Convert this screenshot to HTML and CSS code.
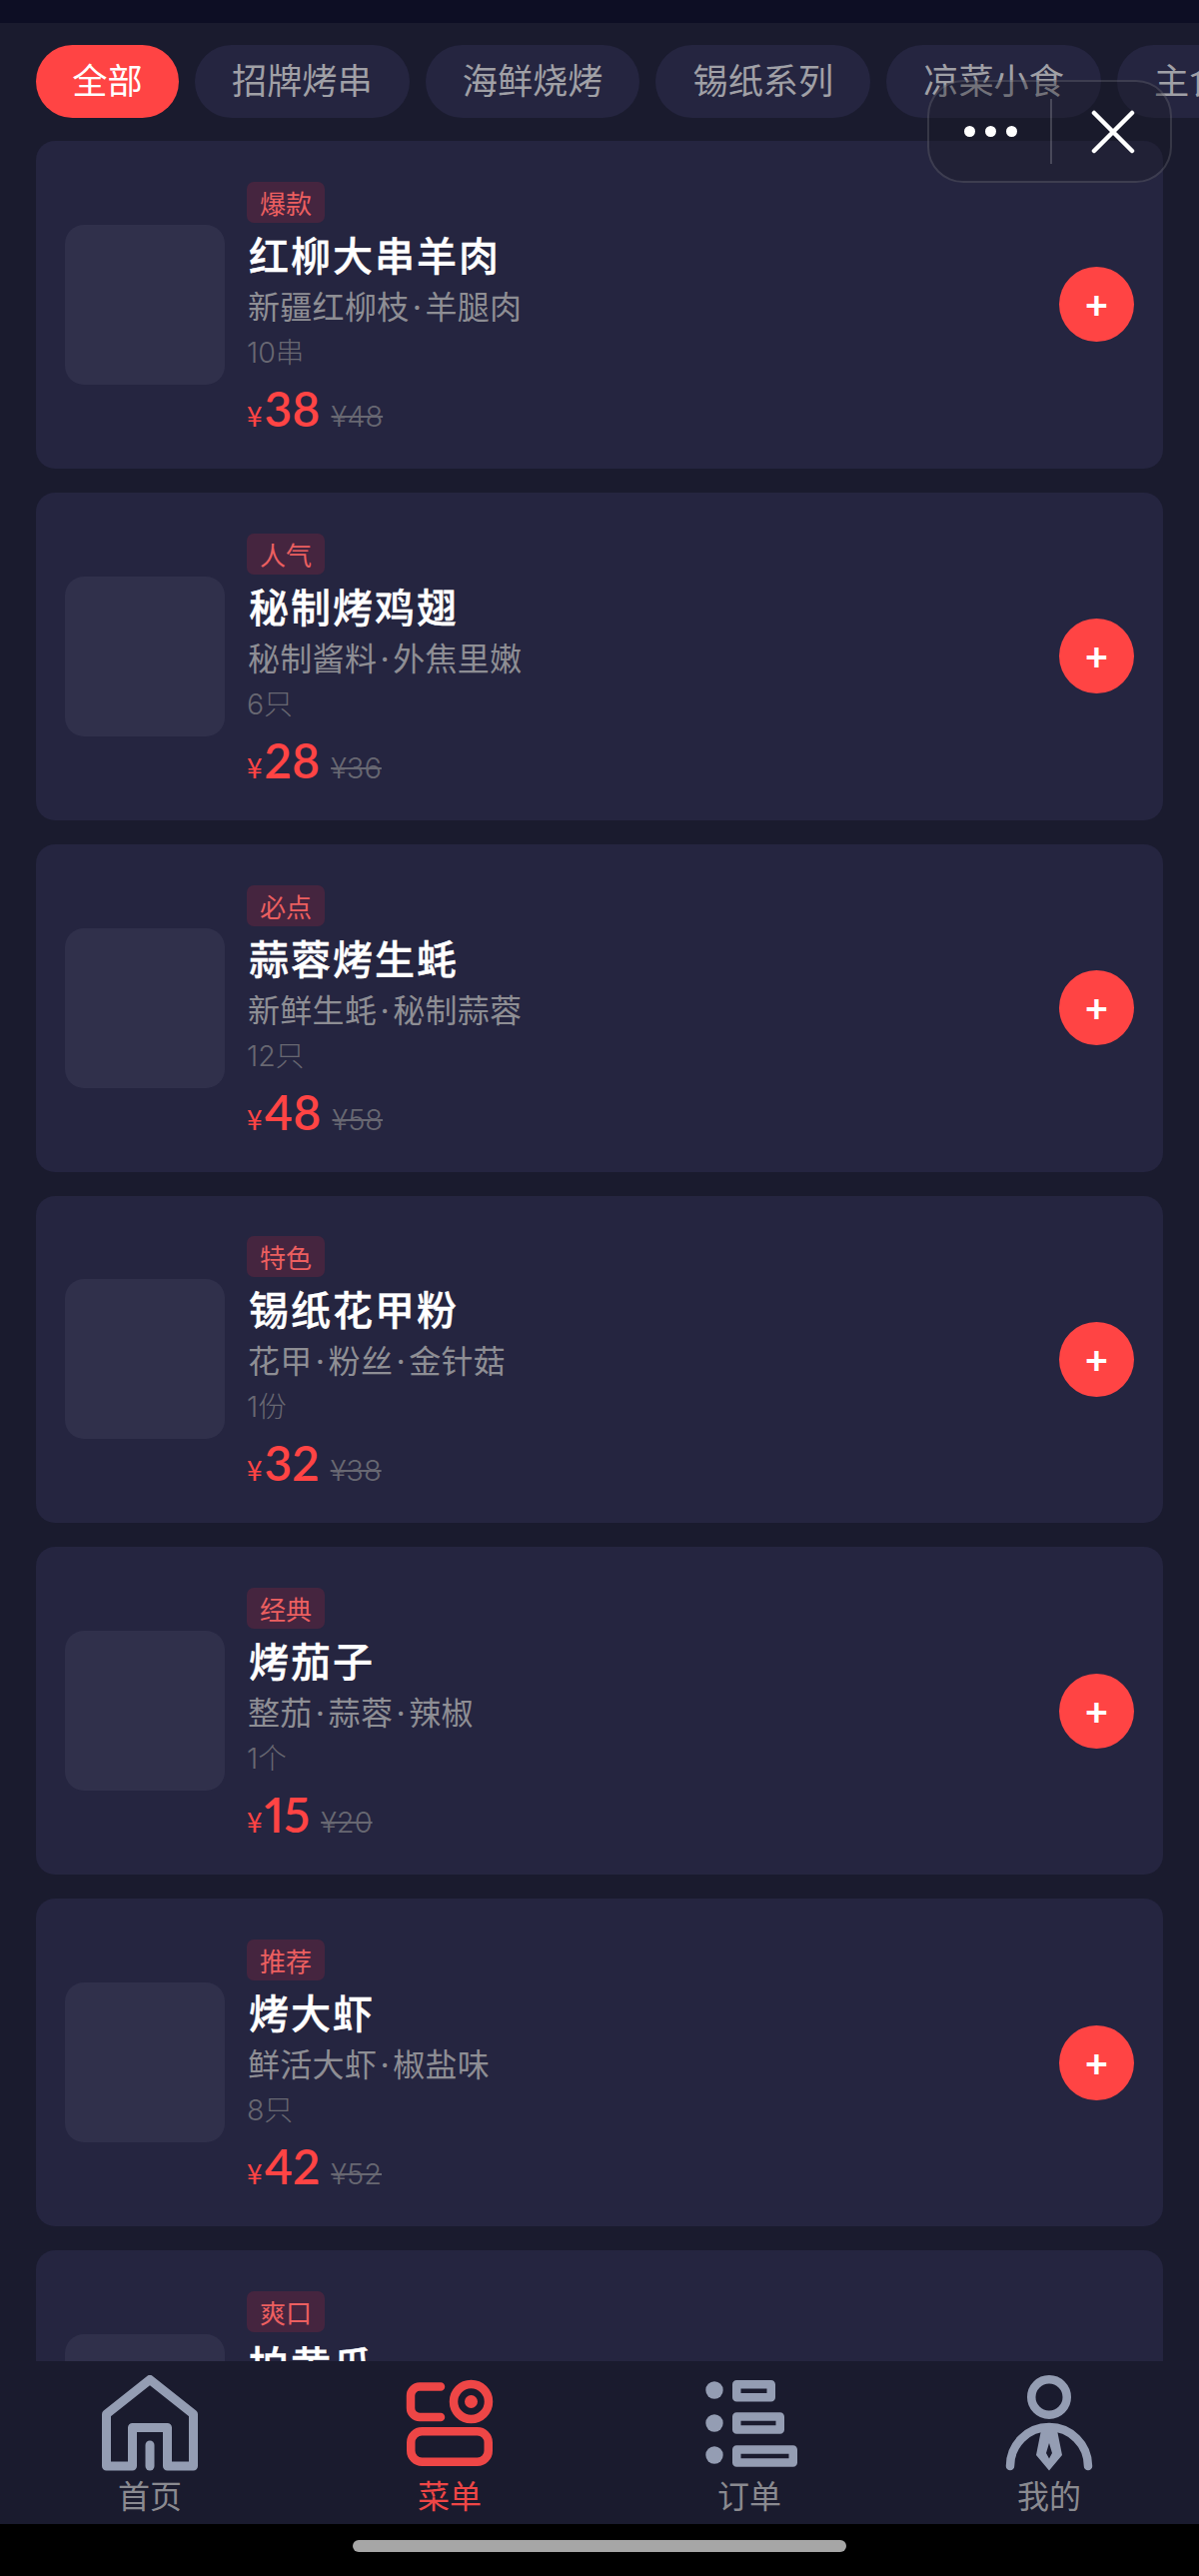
FILE: index.html
```html
<!DOCTYPE html>
<html lang="zh-CN">
<head>
<meta charset="utf-8">
<title>菜单</title>
<link rel="stylesheet" href="styles.css">
</head>
<body>
<div class="app">
  <div class="statusbar"></div>
  <div class="tabs">
    <span class="tab active">全部</span>
    <span class="tab">招牌烤串</span>
    <span class="tab">海鲜烧烤</span>
    <span class="tab">锡纸系列</span>
    <span class="tab">凉菜小食</span>
    <span class="tab">主食饮品</span>
  </div>
  <div class="list">
    <div class="card"><div class="thumb"></div><div class="info"><span class="tag">爆款</span><div class="name">红柳大串羊肉</div><div class="desc">新疆红柳枝<span class="dot">·</span>羊腿肉</div><div class="spec">10串</div><div class="price"><span class="yen">¥</span><span class="now">38</span><span class="old">¥48</span></div></div><div class="add">+</div></div>
    <div class="card"><div class="thumb"></div><div class="info"><span class="tag">人气</span><div class="name">秘制烤鸡翅</div><div class="desc">秘制酱料<span class="dot">·</span>外焦里嫩</div><div class="spec">6只</div><div class="price"><span class="yen">¥</span><span class="now">28</span><span class="old">¥36</span></div></div><div class="add">+</div></div>
    <div class="card"><div class="thumb"></div><div class="info"><span class="tag">必点</span><div class="name">蒜蓉烤生蚝</div><div class="desc">新鲜生蚝<span class="dot">·</span>秘制蒜蓉</div><div class="spec">12只</div><div class="price"><span class="yen">¥</span><span class="now">48</span><span class="old">¥58</span></div></div><div class="add">+</div></div>
    <div class="card"><div class="thumb"></div><div class="info"><span class="tag">特色</span><div class="name">锡纸花甲粉</div><div class="desc">花甲<span class="dot">·</span>粉丝<span class="dot">·</span>金针菇</div><div class="spec">1份</div><div class="price"><span class="yen">¥</span><span class="now">32</span><span class="old">¥38</span></div></div><div class="add">+</div></div>
    <div class="card"><div class="thumb"></div><div class="info"><span class="tag">经典</span><div class="name">烤茄子</div><div class="desc">整茄<span class="dot">·</span>蒜蓉<span class="dot">·</span>辣椒</div><div class="spec">1个</div><div class="price"><span class="yen">¥</span><span class="now">15</span><span class="old">¥20</span></div></div><div class="add">+</div></div>
    <div class="card"><div class="thumb"></div><div class="info"><span class="tag">推荐</span><div class="name">烤大虾</div><div class="desc">鲜活大虾<span class="dot">·</span>椒盐味</div><div class="spec">8只</div><div class="price"><span class="yen">¥</span><span class="now">42</span><span class="old">¥52</span></div></div><div class="add">+</div></div>
    <div class="card"><div class="thumb"></div><div class="info"><span class="tag">爽口</span><div class="name">拍黄瓜</div><div class="desc">黄瓜<span class="dot">·</span>蒜泥<span class="dot">·</span>香醋</div><div class="spec">1份</div><div class="price"><span class="yen">¥</span><span class="now">12</span><span class="old">¥16</span></div></div><div class="add">+</div></div>
  </div>
  <nav class="nav">
    <div class="nav-item">
      <svg class="nav-icon" viewBox="0 0 96 96" fill="none" stroke="#949db3" stroke-width="9" stroke-linejoin="round" stroke-linecap="round"><path d="M30.500 91V52.500H65.500V91H91.500V39L48 4.500L4.500 39V91Z"/><path d="M48 70V91"/></svg>
      <span>首页</span>
    </div>
    <div class="nav-item current">
      <svg class="nav-icon" viewBox="0 0 96 96" fill="none" stroke="#ee4646" stroke-width="8.500" stroke-linecap="round"><path d="M39 11.500H18a9 9 0 0 0-9 9V33a9 9 0 0 0 9 9H39"/><circle cx="69.500" cy="26.500" r="17.500"/><circle cx="69.500" cy="26.500" r="6.500" fill="#ee4646" stroke="none"/><rect x="9.250" y="56.250" width="77.500" height="30.500" rx="11"/></svg>
      <span>菜单</span>
    </div>
    <div class="nav-item">
      <svg class="nav-icon" viewBox="0 0 96 96" fill="none" stroke="#949db3" stroke-width="8.500" stroke-linejoin="round"><circle cx="13" cy="15" r="8.700" fill="#949db3" stroke="none"/><circle cx="13" cy="48" r="8.700" fill="#949db3" stroke="none"/><circle cx="13" cy="80" r="8.700" fill="#949db3" stroke="none"/><rect x="35.250" y="9.250" width="34.500" height="13"/><rect x="35.250" y="41.500" width="43.500" height="13"/><rect x="35.250" y="74.500" width="56.500" height="13"/></svg>
      <span>订单</span>
    </div>
    <div class="nav-item">
      <svg class="nav-icon" viewBox="0 0 96 96" fill="none" stroke="#949db3" stroke-width="8.500" stroke-linecap="round"><circle cx="48" cy="22" r="17.750"/><path d="M9 91A39 39 0 0 1 87 91"/><path fill="#949db3" fill-rule="evenodd" stroke="none" d="M41 50H55L61 80L48 95.500L35 80ZM48 68L45 78L48 83.500L51 78Z"/></svg>
      <span>我的</span>
    </div>
  </nav>
  <div class="homebar"><div class="indicator"></div></div>
  <div class="capsule">
    <div class="capsule-more"><i></i><i></i><i></i></div>
    <div class="capsule-line"></div>
    <svg class="capsule-close" viewBox="0 0 44 44" fill="none" stroke="#fff" stroke-width="4.500" stroke-linecap="round"><path d="M3 3L41 41M41 3L3 41"/></svg>
  </div>
</div>
</body>
</html>
```

FILE: styles.css
```css
* { box-sizing: border-box; }
html, body { margin: 0; padding: 0; }
body {
  width: 1200px;
  height: 2578px;
  overflow: hidden;
  background: #1a1b2e;
  font-family: "Noto Sans CJK SC", "Noto Sans", sans-serif;
}
.app {
  position: relative;
  display: flex;
  flex-direction: column;
  height: 2578px;
  overflow: hidden;
}
.statusbar { flex: none; height: 23px; background: #0d0e24; }
.tabs {
  flex: none;
  display: flex;
  gap: 16px;
  padding: 22px 0 23px 36px;
  overflow: hidden;
  background: #1a1b2e;
}
.tab {
  flex: none;
  height: 73px;
  padding: 0 37px;
  border-radius: 37px;
  background: #252540;
  color: #a0a0a6;
  font-size: 35.2px;
  line-height: 68px;
}
.tab.active { background: #ff4444; color: #fff; padding: 0 36.3px; }
.list {
  flex: 1;
  min-height: 0;
  overflow: hidden;
  display: flex;
  flex-direction: column;
  gap: 24px;
  padding: 0 36px;
}
.card {
  flex: none;
  height: 327.85px;
  display: flex;
  align-items: center;
  padding: 0 29px;
  border-radius: 19px;
  background: #252540;
}
.thumb {
  flex: none;
  width: 160px;
  height: 160px;
  border-radius: 19px;
  background: #30304b;
}
.info {
  flex: 1;
  min-width: 0;
  margin-left: 22px;
  padding-top: 19px;
  display: flex;
  flex-direction: column;
  align-items: flex-start;
}
.tag {
  height: 41px;
  width: 78px;
  border-radius: 7px;
  background: #45253f;
  color: #ec5f60;
  font-size: 26px;
  line-height: 41px;
  text-align: center;
}
.name {
  margin-top: 6px;
  color: #fff;
  font-size: 40px;
  font-weight: 500;
  -webkit-text-stroke: 0.4px #fff;
  line-height: 50px;
  letter-spacing: 2px;
  padding-left: 2px;
}
.desc {
  margin-top: 1px;
  padding-left: 1px;
  color: #8e8e94;
  font-size: 32px;
  letter-spacing: 0.3px;
  line-height: 50px;
}
.dot {
  display: inline-block;
  width: 16px;
  font-family: "Inter", sans-serif;
  text-align: center;
}
.spec {
  margin-top: 0;
  color: #686872;
  font-family: "Inter", "Noto Sans CJK SC", sans-serif;
  font-size: 28.5px;
  font-weight: 300;
  line-height: 40px;
}
.price {
  margin-top: 6px;
  display: flex;
  align-items: baseline;
  line-height: 60px;
}
.yen { color: #ff4444; font-size: 28px; }
.now {
  margin-left: 2px;
  color: #ff4444;
  font-family: "Lato", "Noto Sans CJK SC", sans-serif;
  font-size: 48px;
  font-weight: 600;
  font-variant-numeric: proportional-nums;
}
.old {
  margin-left: 11px;
  color: #686872;
  font-family: "Inter", "Noto Sans CJK SC", sans-serif;
  font-size: 29px;
  font-weight: 300;
  text-decoration: line-through;
}
.add {
  flex: none;
  width: 75px;
  height: 75px;
  border-radius: 50%;
  background: #ff4444;
  color: #fff;
  font-size: 38px;
  font-weight: 700;
  line-height: 74px;
  text-align: center;
}
.nav {
  flex: none;
  height: 163px;
  display: grid;
  grid-template-columns: repeat(4, 1fr);
  padding-top: 14px;
  background: #1a1b2e;
}
.nav-item {
  display: flex;
  flex-direction: column;
  align-items: center;
  color: #8a8a90;
  font-size: 32px;
  line-height: 46px;
}
.nav-item.current { color: #ee4646; }
.nav-icon { width: 96px; height: 96px; display: block; }
.homebar {
  flex: none;
  height: 52px;
  padding-top: 16px;
  background: #000;
}
.indicator {
  width: 494px;
  height: 12px;
  margin: 0 auto;
  border-radius: 6px;
  background: #a6a6a6;
}
.capsule {
  position: absolute;
  left: 928px;
  top: 80px;
  width: 245px;
  height: 103px;
  display: flex;
  align-items: center;
  border: 2px solid rgba(255, 255, 255, 0.13);
  border-radius: 36px;
  background: rgba(26, 26, 36, 0.35);
}
.capsule-more {
  flex: none;
  width: 121px;
  padding-left: 2px;
  display: flex;
  justify-content: center;
  gap: 10px;
}
.capsule-more i {
  width: 11px;
  height: 11px;
  border-radius: 50%;
  background: #fff;
}
.capsule-line {
  flex: none;
  width: 2px;
  height: 65px;
  background: rgba(255, 255, 255, 0.18);
}
.capsule-close {
  flex: none;
  width: 44px;
  height: 44px;
  margin: 0 0 0 39px;
}
```
